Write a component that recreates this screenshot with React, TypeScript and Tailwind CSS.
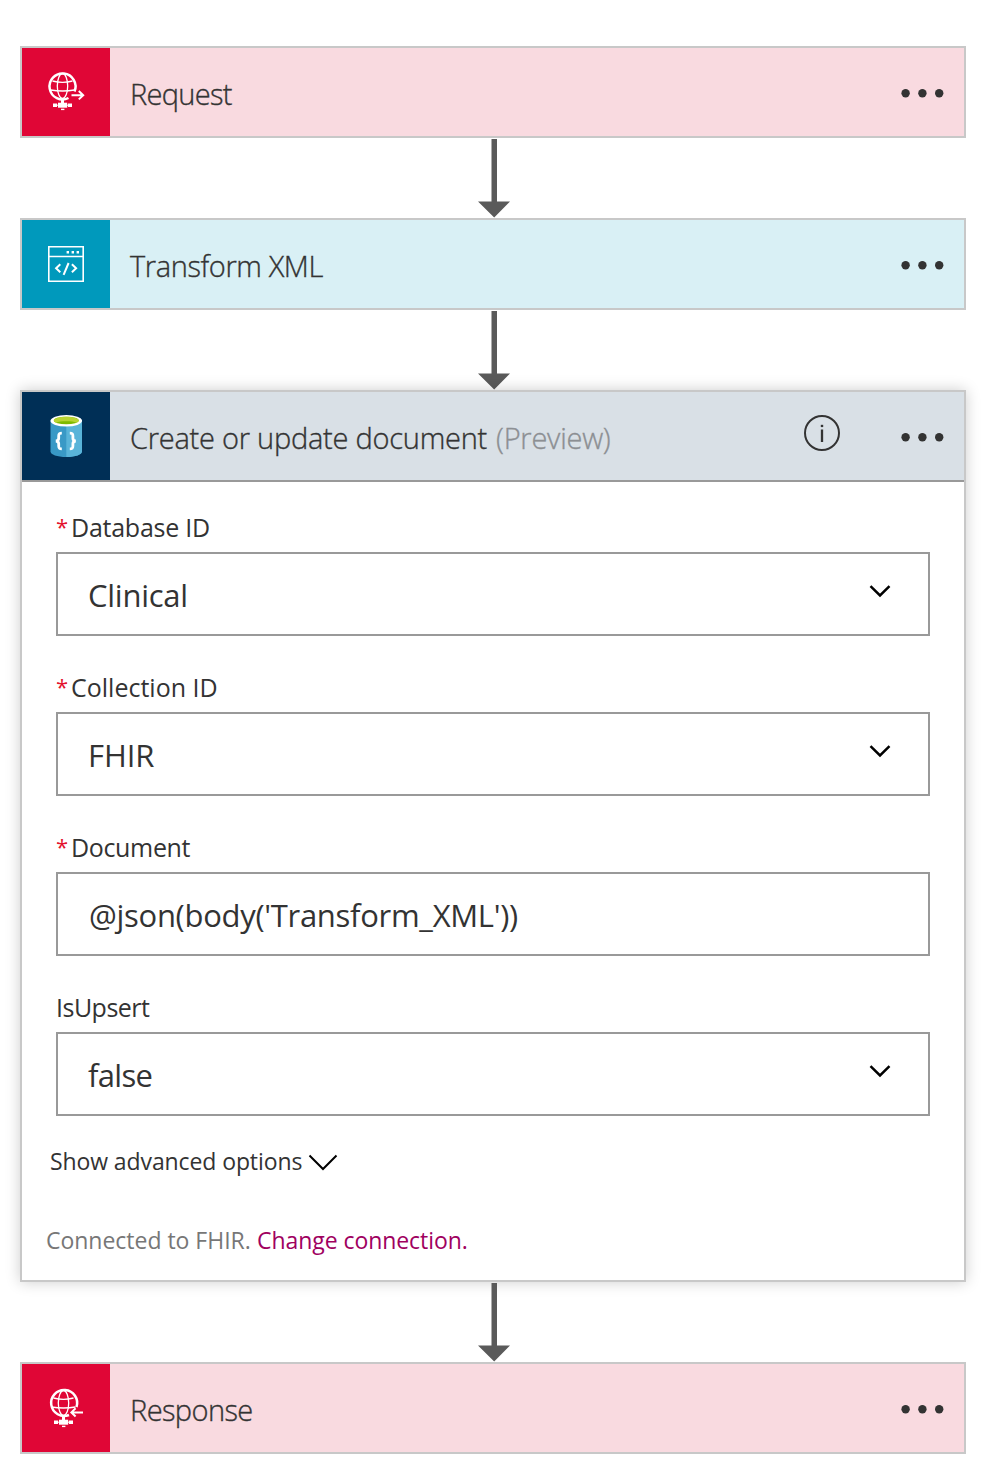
import type { ReactNode } from "react";

function GlobeIcon({ incoming = false }: { incoming?: boolean }) {
  return (
    <svg
      className={incoming ? "mt-[1px] ml-[1px] h-[44px] w-[44px]" : "h-[44px] w-[44px]"}
      viewBox="0 0 44 44"
      fill="none"
      stroke="#fff"
    >
      {incoming ? (
        <path d="M31.500 20A13 13 0 1 0 24 28" strokeWidth="2.500" />
      ) : (
        <path d="M30.500 21.500A13 13 0 1 0 24.500 28" strokeWidth="2.500" />
      )}
      <ellipse cx="18.500" cy="16" rx="5.200" ry="12.500" strokeWidth="1.300" />
      <path d="M8.500 11Q18.500 13.600 28.500 11M6.500 20Q18.500 22 30.500 20" strokeWidth="1.300" />
      <path d="M18.500 28.500v5" strokeWidth="3" />
      <path d="M9 35.200h4M24 35.200h4" strokeWidth="3.600" />
      <path d="M12 35.200h13" strokeWidth="1" />
      <path d="M14 35.200h9.200" strokeWidth="5" />
      <path d="M17 39.400h3.400" strokeWidth="1.400" />
      {incoming ? (
        <path d="M38 25.400H26.500M30.600 21.300l-4.200 4.100 4.200 4.100" strokeWidth="2" />
      ) : (
        <path d="M27.500 25.200H39M34.800 21l4.400 4.200-4.400 4.200" strokeWidth="2" />
      )}
    </svg>
  );
}

function XmlIcon() {
  return (
    <svg className="h-[36px] w-[36px]" viewBox="0 0 36 36" fill="none" stroke="#fff">
      <path d="M.8.8h34.400v34.400H.8z" strokeWidth="1.600" />
      <path d="M1 10.400h34" strokeWidth="1.500" />
      <path d="M18.600 6.200h2.400M23.600 6.200h2.400M28.600 6.200h2.400" strokeWidth="2.400" />
      <path d="M12.300 18.300l-4.200 4 4.200 4M23.900 18.300l4.200 4-4.200 4" strokeWidth="2" />
      <path d="M20.600 17l-5 11.800" strokeWidth="2" />
    </svg>
  );
}

function DatabaseIcon() {
  return (
    <svg className="h-[42px] w-[32px]" viewBox="0 0 32 42">
      <path d="M.5 5.500V36.500C.5 39.500 7 42 16.300 42S32 39.500 32 36.500V5.500z" fill="#3999c6" />
      <path d="M16.300 5.500V42c9 0 15.700-2.500 15.700-5.500V5.500z" fill="#59b4d9" />
      <ellipse cx="16.300" cy="5.800" rx="15.800" ry="5.800" fill="#fff" />
      <ellipse cx="16.300" cy="5.500" rx="12.500" ry="3.800" fill="#7fba00" />
      <path
        d="M3.800 5.500C3.800 3.400 9.400 1.700 16.300 1.700s12.500 1.700 12.500 3.800c0 .8-.9 1.500-2.300 2.200C24.200 6.800 20.500 6.300 16.300 6.300S8.400 6.800 6.100 7.700C4.700 7 3.800 6.300 3.800 5.500z"
        fill="#b8d432"
      />
      <path
        d="M11.800 18.200C9 18.200 8.700 19.200 8.700 21v2.200c0 1.700-.8 2.700-2.900 2.800 2.100.1 2.900 1.100 2.900 2.800V31c0 1.800.3 2.800 3.100 2.800M19.800 18.200c2.800 0 3.100 1 3.100 2.800v2.200c0 1.700.8 2.700 2.900 2.800-2.100.1-2.900 1.100-2.900 2.800V31c0 1.800-.3 2.800-3.100 2.800"
        fill="none"
        stroke="#fff"
        strokeWidth="2.800"
      />
    </svg>
  );
}

function InfoIcon() {
  return (
    <svg className="mb-[6px] h-[36px] w-[36px]" viewBox="0 0 36 36" fill="none" stroke="#333">
      <circle cx="18" cy="18" r="17" strokeWidth="2" />
      <path d="M18 14.500V27" strokeWidth="2.300" />
      <path d="M18 9.800v2.300" strokeWidth="2.400" />
    </svg>
  );
}

function MoreIcon() {
  return (
    <svg className="mt-[2px] h-[10px] w-[44px]" viewBox="0 0 44 10" fill="#333">
      <circle cx="5.600" cy="5.200" r="4.200" />
      <circle cx="22.400" cy="5.200" r="4.200" />
      <circle cx="39.200" cy="5.200" r="4.200" />
    </svg>
  );
}

function Arrow() {
  return (
    <div className="flex h-[80px] justify-center pl-[2px]">
      <svg className="h-[80px] w-[32px]" viewBox="0 0 32 80" fill="#5a5a5a">
        <path d="M13.500 1H19V63.500H32L16.200 79.500 0 63.500H13.500z" />
      </svg>
    </div>
  );
}

interface HeaderProps {
  icon: ReactNode;
  tile: string;
  background: string;
  info?: boolean;
  children: ReactNode;
}

function Header({ icon, tile, background, info, children }: HeaderProps) {
  return (
    <div className={`flex h-[88px] items-center pr-[20px] ${background}`}>
      <div className={`flex h-[88px] w-[88px] shrink-0 items-center justify-center ${tile}`}>{icon}</div>
      <div className="flex grow pt-[4px] pl-[20px] text-[29px] leading-[40px] font-light whitespace-nowrap [-webkit-text-stroke:0.35px_currentColor]">
        {children}
      </div>
      {info && (
        <div className="mr-[60px]">
          <InfoIcon />
        </div>
      )}
      <MoreIcon />
    </div>
  );
}

interface FieldProps {
  label: string;
  labelClass: string;
  value: string;
  valueClass: string;
  required?: boolean;
  select?: boolean;
}

function Field({ label, labelClass, value, valueClass, required, select }: FieldProps) {
  return (
    <div className="flex flex-col gap-[10px]">
      <div className="flex h-[30px] text-[25px] leading-[31px]">
        {required && <span className="w-[14px] text-[22px] leading-[28px] text-[#e3122d]">*</span>}
        <span className={labelClass}>{label}</span>
      </div>
      <div className="flex h-[84px] items-center justify-between border-2 border-[#999] pr-[36px] pl-[30px]">
        <span className={`pt-[2px] text-[31px] leading-[40px] ${valueClass}`}>{value}</span>
        {select && (
          <svg className="mb-[6px] h-[14px] w-[24px]" viewBox="0 0 24 14" fill="none" stroke="#000" strokeWidth="2.500">
            <path d="M2.500 2.200L12 11.500l9.500-9.300" />
          </svg>
        )}
      </div>
    </div>
  );
}

export default function App() {
  return (
    <main className="min-h-[1483px] w-[997px] bg-white pt-[46px] pl-[20px] font-['Open_Sans',sans-serif] text-[#333]">
      <div className="flex w-[946px] flex-col">
        <section className="border-2 border-[#c8c8c8]">
          <Header icon={<GlobeIcon />} tile="bg-[#e00636]" background="bg-[#f9dae0]">
            <span className="tracking-[-0.7px]">Request</span>
          </Header>
        </section>
        <Arrow />
        <section className="border-2 border-[#c8c8c8]">
          <Header icon={<XmlIcon />} tile="bg-[#0099bc]" background="bg-[#d9f0f5]">
            <span className="tracking-[-0.4px]">Transform XML</span>
          </Header>
        </section>
        <Arrow />
        <section className="h-[892px] border-2 border-[#c8c8c8] shadow-[0_0_14px_rgba(0,0,0,0.2)]">
          <Header icon={<DatabaseIcon />} tile="bg-[#002f56]" background="bg-[#d9e0e6]" info>
            <span className="w-[366px] tracking-[-0.25px]">Create or update document</span>
            <span className="tracking-[-0.25px] text-[#8c8f93]">(Preview)</span>
          </Header>
          <div className="border-t-2 border-[#999] pt-[30px]">
            <div className="flex flex-col gap-[36px] px-[34px]">
              <Field label="Database ID" labelClass="tracking-[-0.25px] pl-[1px]" value="Clinical" valueClass="tracking-[-0.25px]" required select />
              <Field label="Collection ID" labelClass="pl-[1px]" value="FHIR" valueClass="tracking-[-0.1px]" required select />
              <Field label="Document" labelClass="tracking-[-0.35px] pl-[1px]" value="@json(body('Transform_XML'))" valueClass="tracking-[-0.29px] pl-[1px]" required />
              <Field label="IsUpsert" labelClass="tracking-[-0.5px]" value="false" valueClass="tracking-[-0.7px]" select />
            </div>
            <div className="mt-[30px] flex h-[30px] items-center pl-[28px] text-[23px] leading-[30px]">
              <span className="w-[258px] tracking-[-0.1px] whitespace-nowrap">Show advanced options</span>
              <svg className="mt-[2px] h-[18px] w-[30px]" viewBox="0 0 30 18" fill="none" stroke="#000" strokeWidth="2">
                <path d="M1.500 2.500L15 16 28.500 2.500" />
              </svg>
            </div>
            <div className="mt-[49px] flex h-[30px] pl-[24px] text-[23px] leading-[31px] whitespace-nowrap">
              <span className="w-[211px] tracking-[-0.02px] text-[#777]">Connected to FHIR.</span>
              <span className="tracking-[-0.06px] text-[#a0005f]">Change connection.</span>
            </div>
          </div>
        </section>
        <Arrow />
        <section className="border-2 border-[#c8c8c8]">
          <Header icon={<GlobeIcon incoming />} tile="bg-[#e00636]" background="bg-[#f9dae0]">
            <span className="tracking-[-0.6px]">Response</span>
          </Header>
        </section>
      </div>
    </main>
  );
}
